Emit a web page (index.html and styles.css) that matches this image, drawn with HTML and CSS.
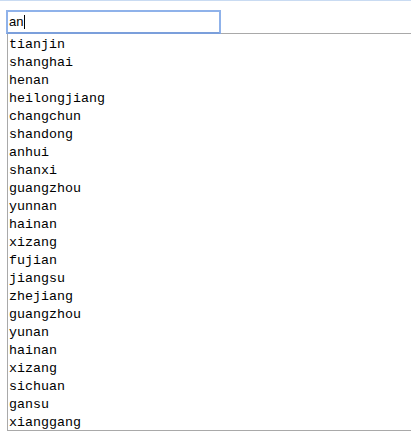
FILE: index.html
```html
<!DOCTYPE html>
<html>
<head>
<meta charset="utf-8">
<link rel="stylesheet" href="styles.css">
</head>
<body>
<div class="topline"></div>
<div class="wrap">
  <div class="search">an<span class="caret"></span></div>
  <ul class="list">
    <li>tianjin</li>
    <li>shanghai</li>
    <li>henan</li>
    <li>heilongjiang</li>
    <li>changchun</li>
    <li>shandong</li>
    <li>anhui</li>
    <li>shanxi</li>
    <li>guangzhou</li>
    <li>yunnan</li>
    <li>hainan</li>
    <li>xizang</li>
    <li>fujian</li>
    <li>jiangsu</li>
    <li>zhejiang</li>
    <li>guangzhou</li>
    <li>yunan</li>
    <li>hainan</li>
    <li>xizang</li>
    <li>sichuan</li>
    <li>gansu</li>
    <li>xianggang</li>
  </ul>
</div>
</body>
</html>
```

FILE: styles.css
```css
html, body {
  margin: 0;
  padding: 0;
  background: #ffffff;
  overflow: hidden;
}
.topline {
  height: 1px;
  background: #c9dbf2;
}
.wrap {
  padding: 9px 0 0 6px;
}
.search {
  position: relative;
  z-index: 1;
  box-sizing: border-box;
  width: 215px;
  height: 24px;
  border: 2px solid #8fb2ea;
  border-bottom-color: #7b9fdb;
  background: #fff;
  font-family: "Liberation Sans", Arial, sans-serif;
  font-size: 13px;
  line-height: 20px;
  padding-left: 1px;
  color: #000;
  display: flex;
  align-items: center;
}
.caret {
  display: inline-block;
  width: 1px;
  height: 14px;
  background: #000;
  margin-left: 1px;
}
.list {
  list-style: none;
  margin: -1px 0 0 1px;
  padding: 0 0 0 1px;
  border-top: 1px solid #a9a9a9;
  border-left: 1px solid #a9a9a9;
  border-bottom: 1px solid #a9a9a9;
  font-family: "Liberation Mono", "DejaVu Sans Mono", monospace;
  font-size: 13.33px;
  line-height: 18px;
  color: #000;
}
.list li {
  height: 18px;
  line-height: 22px;
}
```
